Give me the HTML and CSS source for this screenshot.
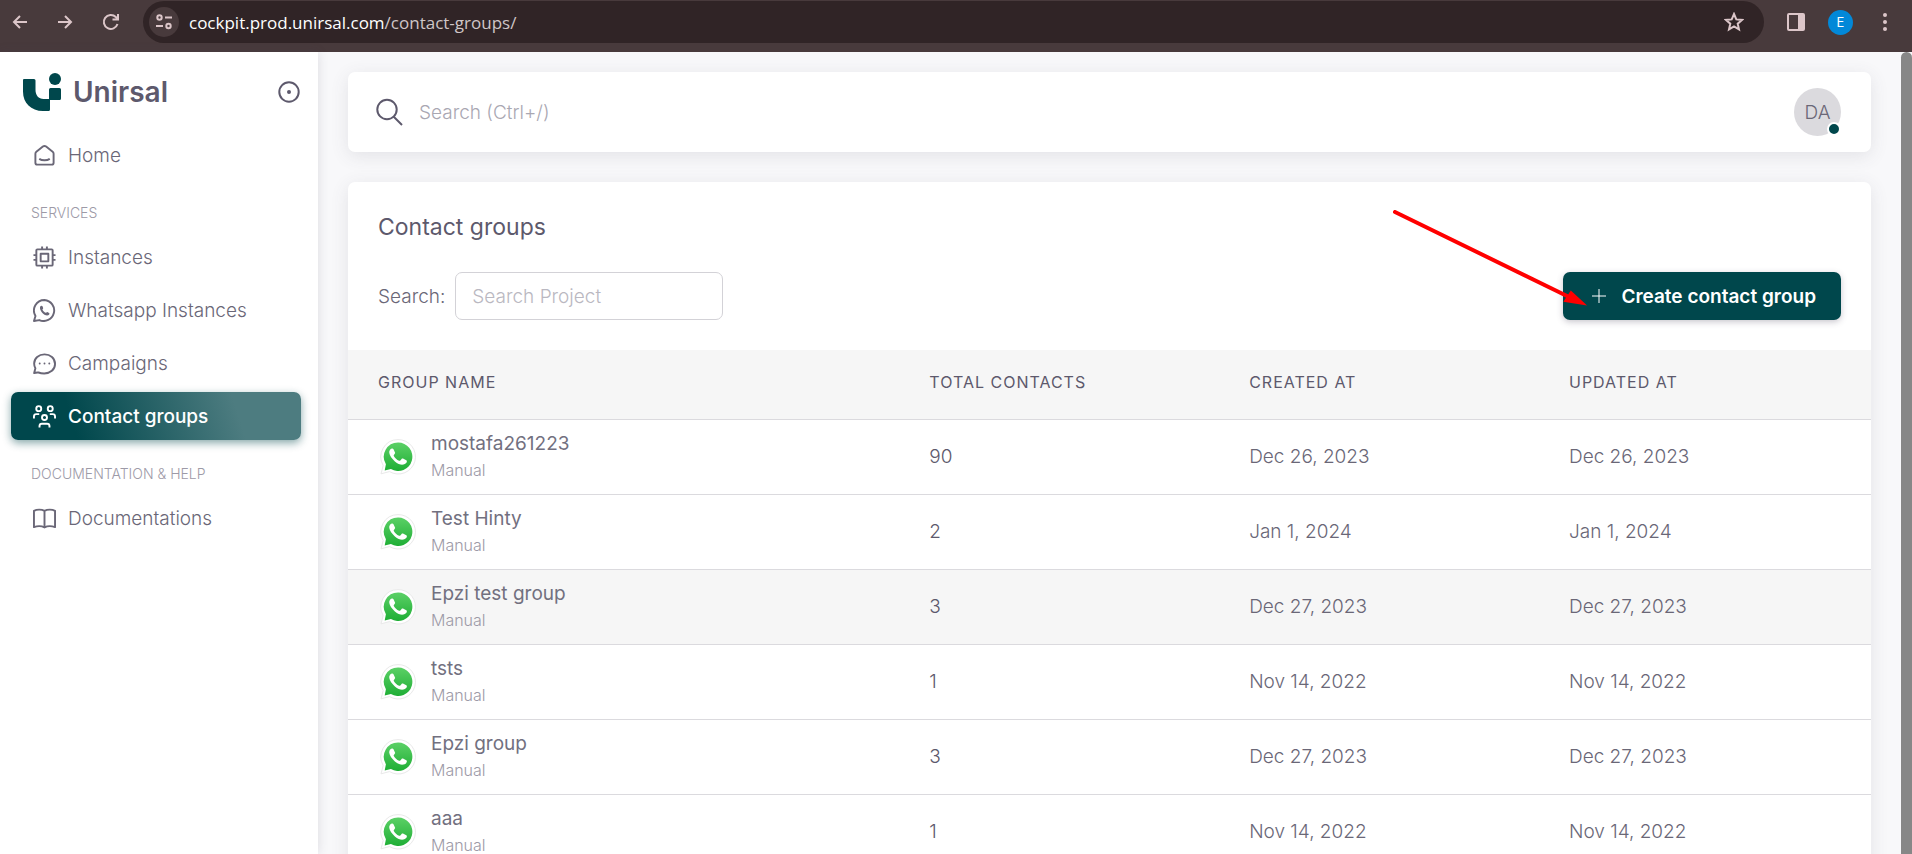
FILE: index.html
```html
<!DOCTYPE html>
<html lang="en">
<head>
<meta charset="utf-8">
<title>Contact groups - Unirsal</title>
<link rel="stylesheet" href="styles.css">
</head>
<body>
<svg class="defs" width="0" height="0" aria-hidden="true">
  <defs>
    <linearGradient id="wa-green" x1="0" y1="0" x2="0" y2="1">
      <stop offset="0" stop-color="#5bd066"/>
      <stop offset="1" stop-color="#1fae35"/>
    </linearGradient>
    <symbol id="wa" viewBox="0 0 36 36">
      <path d="M18 .6A17.2 17.2 0 0 0 3.200 26.500L1 34.800l8.500-2.200A17.200 17.200 0 1 0 18 .6z" fill="#fff" stroke="#e9e9e9" stroke-width="1"/>
      <path d="M18 3.600A14.200 14.200 0 0 0 5.900 25.200L4.700 31.600l6.200-1.600A14.200 14.200 0 1 0 18 3.600z" fill="url(#wa-green)" stroke="none"/>
      <path d="M13.500 10.200c-.4-.8-1-.8-1.600-.7-1.800.5-3 2.400-2.600 4.600.4 2.600 2.600 5.800 5.600 8.300 3 2.400 6.200 3.800 8.600 3.200 1.900-.4 3.300-1.700 3.400-3.300 0-.5-.1-.8-.6-1.100l-3.300-1.600c-.6-.3-1-.2-1.400.3l-1.300 1.600c-.3.4-.7.4-1.200.2-2.300-1-4.100-2.700-5.300-4.800-.2-.4-.2-.7.100-1l1-1.300c.3-.4.300-.8.100-1.200z" fill="#fff" stroke="none"/>
    </symbol>
  </defs>
</svg>

<header class="browser">
  <div class="browser-nav">
    <button class="bbtn" aria-label="Back"><svg width="16" height="16" viewBox="0 0 16 16"><path d="M15 8H2M8 2L2 8l6 6"/></svg></button>
    <button class="bbtn" aria-label="Forward"><svg width="16" height="16" viewBox="0 0 16 16"><path d="M1 8h13M8 2l6 6-6 6"/></svg></button>
    <button class="bbtn" aria-label="Reload"><svg width="18" height="18" viewBox="0 0 18 18"><path d="M15.500 11A7 7 0 1 1 13.800 4L16 6.200M16 1v5.500h-5.500"/></svg></button>
  </div>
  <div class="address">
    <button class="site" aria-label="Site information"><svg width="18" height="18" viewBox="0 0 18 18"><circle cx="4.500" cy="4.500" r="2.200"/><path d="M10 4.500h7M1 13h7"/><circle cx="13.500" cy="13" r="2.200"/></svg></button>
    <span class="url">cockpit.prod.unirsal.com<span class="url-path">/contact-groups/</span></span>
    <button class="bbtn" aria-label="Bookmark"><svg width="20" height="20" viewBox="0 0 20 20"><path d="M10 2l2.300 5.400 5.700.5-4.300 3.800 1.300 5.700-5-3-5 3 1.300-5.700L2 7.900l5.700-.5z"/></svg></button>
  </div>
  <div class="browser-actions">
    <button class="bbtn" aria-label="Side panel"><svg width="18" height="18" viewBox="0 0 18 18"><rect x="1" y="1" width="16" height="16" rx="1"/><path d="M11 1h6v16h-6z" class="solid"/></svg></button>
    <button class="profile" aria-label="Profile">E</button>
    <button class="bbtn menu-btn" aria-label="Menu"><svg width="4" height="18" viewBox="0 0 4 18"><g class="dots"><circle cx="2" cy="2" r="2"/><circle cx="2" cy="9" r="2"/><circle cx="2" cy="16" r="2"/></g></svg></button>
  </div>
</header>

<div class="app">
  <aside class="sidebar">
    <div class="brand">
      <svg class="logo" width="38" height="38" viewBox="0 0 38 38"><path d="M1 6H11a1.500 1.500 0 0 1 1.500 1.500V17c0 5 3 9 8 9h5.500V16.500a1.500 1.500 0 0 1 1.500-1.500h9a1.500 1.500 0 0 1 1.500 1.500v9a1.500 1.500 0 0 1-1.500 1.500H27v9.500a1.500 1.500 0 0 1-1.500 1.500H20C8 38 0 30 0 18.500V7a1 1 0 0 1 1-1z"/><circle cx="32" cy="6" r="6"/></svg>
      <span class="brand-name">Unirsal</span>
      <button class="pin" aria-label="Toggle menu"><svg width="22" height="22" viewBox="0 0 22 22"><circle cx="11" cy="11" r="9.700"/><circle cx="11" cy="11" r="1"/></svg></button>
    </div>
    <nav class="menu">
      <a class="item" href="#"><svg class="icon" viewBox="0 0 24 24"><path d="M2.500 10.200c0-1 .3-1.500 1-2.100l6.800-5.400c1.200-.9 2.200-.9 3.400 0l6.800 5.400c.7.600 1 1.100 1 2.100v9.300a2 2 0 0 1-2 2h-15a2 2 0 0 1-2-2z"/><path d="M6.500 15.500c3 2 8 2 11 0"/></svg>Home</a>
      <h2 class="section">SERVICES</h2>
      <a class="item" href="#"><svg class="icon" viewBox="0 0 24 24"><rect x="3.500" y="3.500" width="17" height="17" rx="1"/><rect x="8" y="8" width="8" height="8"/><path d="M9.500 .5v3M14.500 .5v3M9.500 20.500v3M14.500 20.500v3M.5 9.500h3M.5 14.500h3M20.500 9.500h3M20.500 14.500h3"/></svg>Instances</a>
      <a class="item" href="#"><svg class="icon" viewBox="0 0 24 24"><path d="M12 1a11 11 0 0 0-9.400 16.700L1 23l5.600-1A11 11 0 1 0 12 1z"/><path class="fill" d="M7.400 8c.7-1.200 2.200-1.300 2.500-.5l.7 2c.2.600-.9 1.300-.7 1.700.8 1.500 1.800 2.500 3.300 3.200.5.200 1.100-1 1.700-.8l1.900.9c.8.400.2 2-.9 2.500-3.700 1.200-9.700-5-8.500-9z"/></svg>Whatsapp Instances</a>
      <a class="item" href="#"><svg class="icon" viewBox="0 0 24 24"><path d="M12 2.500C6 2.500 1.200 6.500 1.200 12c0 2.300.5 3.700 1.300 5l-1.300 5c1.500-.6 3-.7 4.500-.6 1.800.7 4 1 6 1 6.300 0 11.300-4 11.300-10S18 2.500 12 2.500z"/><path class="dot" d="M7 12h.01M12 12h.01M17 12h.01"/></svg>Campaigns</a>
      <a class="item active" href="#" aria-current="page"><svg class="icon" viewBox="0 0 24 24"><circle cx="6" cy="3.800" r="2.600"/><circle cx="18" cy="3.800" r="2.600"/><circle cx="12" cy="13" r="2.600"/><path d="M1 14v-2c0-1.500 1-2.500 2.500-2.500h3M23 14v-2c0-1.500-1-2.500-2.500-2.500h-3M6.800 23.500V22c0-1.500 1-2.500 2.500-2.500h5.400c1.500 0 2.500 1 2.500 2.500v1.500"/></svg>Contact groups</a>
      <h2 class="section">DOCUMENTATION &amp; HELP</h2>
      <a class="item" href="#"><svg class="icon" viewBox="0 0 24 24"><path d="M12 4C9 2.300 4 2.300 1 4v17c3.500-1.300 8-1.300 11 .3 3-1.600 7.500-1.600 11-.3V4C20 2.300 15 2.300 12 4zM12 4v17"/></svg>Documentations</a>
    </nav>
  </aside>

  <main class="content">
    <div class="navbar">
      <label class="nav-search">
        <svg width="27" height="28" viewBox="0 0 27 28"><circle cx="11" cy="11.500" r="9.700"/><path d="M17.500 18.500L26 27"/></svg>
        <input type="search" aria-label="Search" placeholder="Search (Ctrl+/)">
      </label>
      <button class="avatar">DA<span class="status"></span></button>
    </div>

    <section class="card">
      <h1 class="card-title">Contact groups</h1>
      <div class="tools">
        <label class="filter" for="project">Search:<input id="project" type="text" placeholder="Search Project"></label>
        <button class="create"><svg width="16" height="16" viewBox="0 0 16 16"><path d="M8 1v14M1 8h14"/></svg>Create contact group</button>
        <svg class="pointer" width="194" height="96" viewBox="0 0 194 96" aria-hidden="true"><path d="M2 2l172 84" class="shaft"/><path d="M191 94l-13-12-6 9z" class="head"/></svg>
      </div>
      <table class="groups">
        <colgroup><col class="c-name"><col class="c-mid"><col class="c-mid"><col></colgroup>
        <thead><tr><th>GROUP NAME</th><th>TOTAL CONTACTS</th><th>CREATED AT</th><th>UPDATED AT</th></tr></thead>
        <tbody>
          <tr><td><div class="group"><svg class="wa"><use href="#wa"/></svg><div><div class="name">mostafa261223</div><div class="kind">Manual</div></div></div></td><td class="total">90</td><td>Dec 26, 2023</td><td>Dec 26, 2023</td></tr>
          <tr><td><div class="group"><svg class="wa"><use href="#wa"/></svg><div><div class="name">Test Hinty</div><div class="kind">Manual</div></div></div></td><td class="total">2</td><td>Jan 1, 2024</td><td>Jan 1, 2024</td></tr>
          <tr class="hovered"><td><div class="group"><svg class="wa"><use href="#wa"/></svg><div><div class="name">Epzi test group</div><div class="kind">Manual</div></div></div></td><td class="total">3</td><td>Dec 27, 2023</td><td>Dec 27, 2023</td></tr>
          <tr><td><div class="group"><svg class="wa"><use href="#wa"/></svg><div><div class="name">tsts</div><div class="kind">Manual</div></div></div></td><td class="total">1</td><td>Nov 14, 2022</td><td>Nov 14, 2022</td></tr>
          <tr><td><div class="group"><svg class="wa"><use href="#wa"/></svg><div><div class="name">Epzi group</div><div class="kind">Manual</div></div></div></td><td class="total">3</td><td>Dec 27, 2023</td><td>Dec 27, 2023</td></tr>
          <tr><td><div class="group"><svg class="wa"><use href="#wa"/></svg><div><div class="name">aaa</div><div class="kind">Manual</div></div></div></td><td class="total">1</td><td>Nov 14, 2022</td><td>Nov 14, 2022</td></tr>
        </tbody>
      </table>
    </section>
  </main>
  <div class="scrollbar"></div>
</div>
</body>
</html>
```

FILE: styles.css
```css
* { box-sizing: border-box; }
body {
  margin: 0;
  height: 100vh;
  display: flex;
  flex-direction: column;
  overflow: hidden;
  font-family: Inter, "Liberation Sans", sans-serif;
  font-size: 19px;
  font-weight: 300;
  color: #6a6777;
  background: #f8f8fa;
}
button, input { font: inherit; color: inherit; border: 0; background: none; padding: 0; }
svg { flex: none; fill: none; stroke: currentColor; }
.defs { position: absolute; }

.browser {
  flex: none;
  display: flex;
  align-items: flex-start;
  height: 52px;
  padding-top: 1px;
  background: #483a3c;
  color: #dcc6c9;
}
.browser-nav { display: flex; align-items: center; gap: 29px; width: 143px; height: 42px; padding-left: 12px; }
.bbtn { display: flex; stroke-width: 2; }
.address {
  flex: 1;
  display: flex;
  align-items: center;
  height: 42px;
  padding: 0 20px 0 6px;
  border-radius: 21px;
  background: #302426;
}
.site {
  display: grid;
  place-items: center;
  width: 30px;
  height: 30px;
  border-radius: 50%;
  background: #483a3c;
  stroke-width: 2;
}
.url { flex: 1; padding-left: 10px; font-family: "Open Sans", "Noto Sans", sans-serif; font-size: 17px; font-weight: 400; color: #fff; }
.url-path { color: #cfc6c7; }
.browser-actions { display: flex; align-items: center; height: 42px; padding: 0 25px 0 23px; gap: 23px; }
.solid, .dots { fill: currentColor; stroke: none; }
.profile { width: 25px; height: 25px; border-radius: 50%; background: #0288d8; color: #fff; font-size: 13px; font-weight: 400; }
.menu-btn { padding-left: 7px; }

.app { flex: 1; min-height: 0; display: flex; }
.sidebar { flex: none; width: 318px; background: #fff; box-shadow: 0 0 10px rgba(75, 70, 92, .16); }
.brand { display: flex; align-items: center; height: 79px; padding: 0 18px 0 23px; }
.logo { fill: #00474c; stroke: none; }
.brand-name { flex: 1; padding-left: 12px; font-size: 28px; font-weight: 600; color: #5d596c; }
.pin { display: flex; color: #5d596c; stroke-width: 2; }
.menu { display: flex; flex-direction: column; gap: 5px; padding: 0 17px 0 11px; }
.item {
  display: flex;
  align-items: center;
  gap: 12px;
  height: 48px;
  padding: 0 22px;
  border-radius: 7px;
  color: inherit;
  text-decoration: none;
}
.icon { width: 23px; height: 23px; stroke-width: 2; stroke-linejoin: round; }
.icon .fill { fill: currentColor; stroke: none; }
.icon .dot { stroke-linecap: round; }
.active {
  color: #fff;
  font-weight: 500;
  background: linear-gradient(72deg, #00474c 22%, #4d7c80 77%);
  box-shadow: 0 3px 8px rgba(0, 71, 76, .48);
}
.section { margin: 0; height: 44px; padding: 0 20px; font-size: 14px; font-weight: 300; line-height: 58px; color: #9d9aa7; }

.content { flex: 1; min-width: 0; padding: 20px 30px 0; display: flex; flex-direction: column; gap: 30px; }
.navbar, .card { background: #fff; border-radius: 7px; box-shadow: 0 4px 18px rgba(75, 70, 92, .12); }
.navbar { flex: none; height: 80px; padding: 0 30px 0 28px; display: flex; align-items: center; }
.nav-search { flex: 1; display: flex; gap: 16px; align-items: center; color: #5d596c; stroke-width: 2; }
.nav-search input { flex: 1; outline: 0; }
input::placeholder { color: #a9a7b2; opacity: 1; }
.avatar { position: relative; width: 47px; height: 48px; border-radius: 50%; background: #dbdade; }
.status {
  position: absolute;
  right: 0;
  bottom: 0;
  width: 14px;
  height: 14px;
  border: 2px solid #fff;
  border-radius: 50%;
  background: #00474c;
}

.card { flex: none; }
.card-title { margin: 0; padding: 30px 30px 0; font-size: 23px; font-weight: 400; line-height: 30px; color: #5d596c; }
.tools { position: relative; display: flex; justify-content: space-between; align-items: center; padding: 30px; }
.filter { display: flex; align-items: center; gap: 10px; }
.filter input { width: 268px; height: 48px; padding: 0 16px; border: 1px solid #d3d2d7; border-radius: 7px; }
.filter input::placeholder { color: #bab8c1; }
.create {
  display: flex;
  align-items: center;
  gap: 14px;
  height: 48px;
  padding: 0 25px 0 28px;
  border-radius: 7px;
  background: #00474c;
  color: #fff;
  font-weight: 600;
  box-shadow: 0 2px 6px rgba(75, 70, 92, .3);
}
.create svg { stroke-width: 1; }
.pointer { position: absolute; right: 284px; bottom: 44px; }
.shaft { stroke: #f00; stroke-width: 4; stroke-linecap: round; }
.head { fill: #f00; stroke: #f00; stroke-width: 2; }

.groups { width: 100%; border-collapse: collapse; table-layout: fixed; }
.c-name { width: 36.2%; }
.c-mid { width: 21%; }
th { height: 69px; padding: 0 30px 4px; background: #f6f6f6; text-align: left; font-size: 16px; font-weight: 400; letter-spacing: 1px; color: #5d596c; }
td { height: 75px; padding: 0 30px; }
th, td { border-bottom: 1px solid #dbdade; }
.hovered { background: #f6f6f6; }
.total { color: #5d596c; }
.group { display: flex; align-items: center; gap: 15px; }
.wa { width: 36px; height: 36px; margin-left: 2px; }
.name { font-weight: 400; line-height: 27px; color: #72707f; }
.kind { font-size: 16px; line-height: 26px; color: #9d9aa7; }

.scrollbar { flex: none; width: 11px; border-radius: 6px 6px 0 0; background: #878787; }
```
